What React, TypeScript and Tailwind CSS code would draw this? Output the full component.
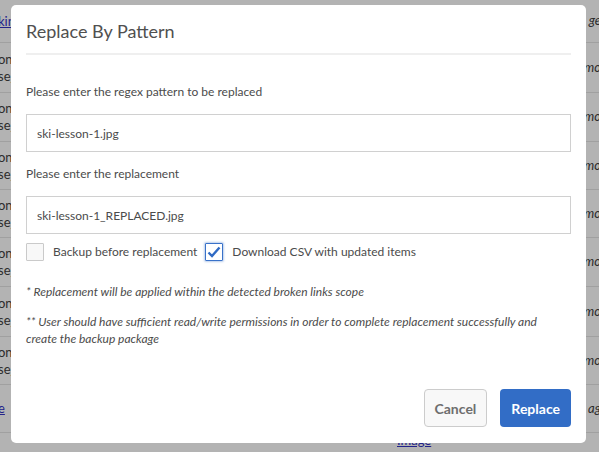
import {useState} from 'react'

const rows = [
    {left: 'kin', leftLink: true, right: 'ge', h: 'h-[43px]'},
    {left: 'on', left2: 'se_', right: 'mo', h: 'h-[50px]'},
    {left: 'on', left2: 'se_', right: 'mo', h: 'h-[49px]'},
    {left: 'on', left2: 'se_', right: 'mo', h: 'h-[48px]'},
    {left: 'on', left2: 'se_', right: 'mo', h: 'h-[48px]'},
    {left: 'on', left2: 'se_', right: 'mo', h: 'h-[49px]'},
    {left: 'on', left2: 'se_', right: 'mo', h: 'h-[50px]'},
    {left: 'on', left2: 'se_', right: 'mo', h: 'h-[48px]'},
    {left: 'e', leftLink: true, right: 'ag', h: 'h-[48px]'},
]

function BackgroundTable() {
    return (
        <div className="w-[599px] h-[452px] bg-[#b3b3b3] text-[13px] text-[#2c2c2c] overflow-hidden">
            {rows.map((row, i) => (
                <div key={i} className={`${row.h} flex items-center justify-between border-b border-[#a0a0a0]`}>
                    <div className="flex flex-col leading-[17px] -ml-[2px]">
                        {row.leftLink ? (
                            <span className="text-[#22228a] underline">{row.left}</span>
                        ) : (
                            <>
                                <span>{row.left}</span>
                                <span>{row.left2}</span>
                            </>
                        )}
                    </div>
                    <span className="italic pr-[2px] translate-x-[4px]">{row.right}</span>
                </div>
            ))}
            <div className="pl-[397px] text-[#22228a] underline leading-[14px]">Image</div>
        </div>
    )
}

function Checkbox({checked, onChange, label}: {checked: boolean; onChange: () => void; label: string}) {
    return (
        <label className="flex items-center gap-[9px] cursor-pointer" onClick={onChange}>
            <span
                className={
                    checked
                        ? 'w-[18px] h-[18px] border border-[#3a72c9] bg-white rounded-[1px] flex items-center justify-center shadow-[0_0_2px_1px_rgba(58,114,201,0.35)]'
                        : 'w-[18px] h-[18px] border border-[#cacaca] bg-[#f8f8f8] rounded-[1px]'
                }
            >
                {checked && (
                    <svg width="14" height="12" viewBox="0 0 14 12">
                        <path d="M1.5 6.5 L5 10 L12.5 1.5" fill="none" stroke="#2f6ac4" strokeWidth="2.4"/>
                    </svg>
                )}
            </span>
            <span>{label}</span>
        </label>
    )
}

export default function App() {
    const [pattern, setPattern] = useState('ski-lesson-1.jpg')
    const [replacement, setReplacement] = useState('ski-lesson-1_REPLACED.jpg')
    const [backup, setBackup] = useState(false)
    const [csv, setCsv] = useState(true)

    return (
        <div className="relative w-[599px] h-[452px] overflow-hidden" style={{fontFamily: 'Lato, "Noto Sans", sans-serif'}}>
            <BackgroundTable/>

            <div className="absolute left-[11px] top-[5px] w-[575px] h-[438px] bg-white rounded-[5px] px-[15px] pt-[14px] flex flex-col text-[12px] text-[#4b4b4b]">
                <h2 className="text-[18px] leading-[24px] text-[#505050] font-normal pb-[10px] border-b-2 border-[#efefef]">
                    Replace By Pattern
                </h2>

                <div className="mt-[29px] leading-[16px]">Please enter the regex pattern to be replaced</div>
                <input
                    value={pattern}
                    onChange={(e) => setPattern(e.target.value)}
                    className="mt-[14px] h-[38px] border border-[#d0d0d0] px-[10px] outline-none text-[#4b4b4b]"
                />

                <div className="mt-[14px] leading-[16px]">Please enter the replacement</div>
                <input
                    value={replacement}
                    onChange={(e) => setReplacement(e.target.value)}
                    className="mt-[14px] h-[38px] border border-[#d0d0d0] px-[10px] outline-none text-[#4b4b4b]"
                />

                <div className="mt-[9px] flex items-center gap-[8px]">
                    <Checkbox checked={backup} onChange={() => setBackup(!backup)} label="Backup before replacement"/>
                    <Checkbox checked={csv} onChange={() => setCsv(!csv)} label="Download CSV with updated items"/>
                </div>

                <p className="mt-[22px] italic text-[12px] leading-[17px]">
                    * Replacement will be applied within the detected broken links scope
                </p>
                <p className="mt-[13px] italic text-[12px] leading-[17px] pr-[10px]">
                    ** User should have sufficient read/write permissions in order to complete replacement successfully and create the backup package
                </p>

                <div className="mt-auto mb-[16px] flex justify-end gap-[13px]">
                    <button className="h-[38px] px-[10px] rounded-[4px] border border-[#cccccc] bg-[#f8f8f8] text-[#6e6e6e] font-bold text-[14px]">
                        Cancel
                    </button>
                    <button className="h-[38px] px-[11px] rounded-[4px] bg-[#326dc6] text-white font-bold text-[14px]">
                        Replace
                    </button>
                </div>
            </div>
        </div>
    )
}
